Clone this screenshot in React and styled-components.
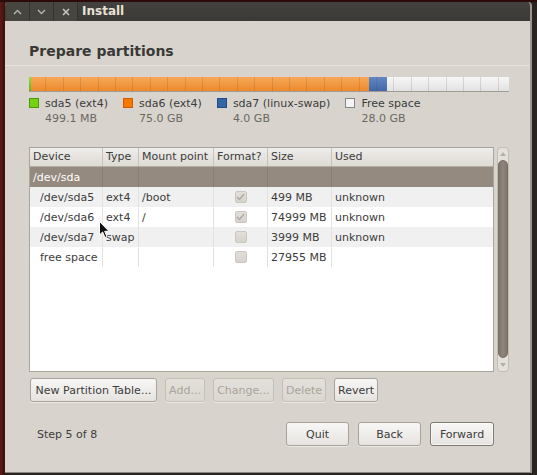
import React from "react";
import styled, { createGlobalStyle, css } from "styled-components";

const GlobalStyle = createGlobalStyle`
  html, body { margin: 0; padding: 0; }
  body {
    width: 537px;
    height: 475px;
    overflow: hidden;
    background: #2a2421;
    font-family: "DejaVu Sans", "Liberation Sans", sans-serif;
    font-size: 11px;
    color: #3c3c3c;
  }
`;

const Desktop = styled.div`
  position: relative;
  width: 537px;
  height: 475px;
  display: flex;
  align-items: flex-start;
  padding: 2px 0 0 5px;
  box-sizing: border-box;
  background: linear-gradient(to right, #5a1b16 0, #3d0f0c 5px, #2a2421 5px);
  &::before {
    content: "";
    position: absolute;
    left: 0; top: 0; right: 0; height: 2px;
    background: #2c0c0b;
  }
`;

const Window = styled.div`
  position: relative;
  width: 527px;
  height: 471px;
  background: #d8d4cd;
  border-right: 2px solid #9a958e;
  border-bottom: 1px solid #8a857e;
  border-radius: 4px 4px 0 0;
  box-sizing: border-box;
  display: flex;
  flex-direction: column;
  overflow: hidden;
`;

const TitleBar = styled.div`
  height: 19px;
  flex: 0 0 19px;
  display: flex;
  align-items: center;
  background: linear-gradient(#43423e, #3a3935);
  padding-left: 1px;
`;

const WinButton = styled.div`
  width: 24px;
  height: 19px;
  display: flex;
  align-items: center;
  justify-content: center;
  background: #46453f;
  border-right: 1px solid #34332f;
  box-sizing: border-box;
  color: #b5b2ab;
`;

const TitleText = styled.div`
  margin-left: 4px;
  font-weight: bold;
  font-size: 12px;
  color: #e6e2da;
  line-height: 19px;
`;

const Body = styled.div`
  display: flex;
  flex-direction: column;
  padding: 0 21px 0 24px;
`;

const Heading = styled.h1`
  margin: 22px 0 0;
  font-size: 14px;
  line-height: 17px;
  font-weight: bold;
  color: #3a3935;
`;

const Divider = styled.div`
  height: 1px;
  margin: 5px -21px 0 -24px;
  background: #e6e3de;
`;

const Bar = styled.div`
  position: relative;
  margin-top: 11px;
  width: 480px;
  height: 14px;
  display: flex;
  box-shadow: 0 1px 0 rgba(60, 50, 40, 0.35);
  &::after {
    content: "";
    position: absolute;
    inset: 0;
    background: repeating-linear-gradient(
      to right,
      transparent 0,
      transparent 16.4px,
      rgba(90, 60, 30, 0.16) 16.4px,
      rgba(90, 60, 30, 0.16) 17.4px
    );
  }
`;

const segColors = {
  green: ["#8ae234", "#5fb51a"],
  orange: ["#f8a858", "#ec8a2e"],
  blue: ["#6288c4", "#3f67a6"],
  free: ["#f6f6f6", "#e2e2e2"],
};

const Segment = styled.div`
  flex: 0 0 ${(p) => p.$w}px;
  background: linear-gradient(
    ${(p) => segColors[p.$kind][0]},
    ${(p) => segColors[p.$kind][1]}
  );
`;

const Legend = styled.div`
  margin-top: 5px;
  display: flex;
  gap: 15px;
`;

const LegendItem = styled.div`
  display: flex;
  align-items: flex-start;
  gap: 6px;
`;

const swatch = {
  green: ["#73d216", "#4e9a06"],
  orange: ["#f57900", "#ce5c00"],
  blue: ["#3465a4", "#204a87"],
  free: ["#f4f4f4", "#888683"],
};

const Swatch = styled.div`
  width: 10px;
  height: 10px;
  margin-top: 2px;
  box-sizing: border-box;
  background: ${(p) => swatch[p.$kind][0]};
  border: 1px solid ${(p) => swatch[p.$kind][1]};
`;

const LegendText = styled.div`
  display: flex;
  flex-direction: column;
  line-height: 15px;
`;

const LegendName = styled.span`
  color: #3c3c3c;
`;

const LegendSize = styled.span`
  color: #6b6862;
`;

const TableArea = styled.div`
  margin-top: 21px;
  display: flex;
  gap: 3px;
  height: 225px;
`;

const TableFrame = styled.div`
  width: 465px;
  height: 225px;
  box-sizing: border-box;
  border: 1px solid #a9a49c;
  background: #ffffff;
  display: flex;
  flex-direction: column;
`;

const COLS = "73px 36px 75px 54px 64px 1fr";

const HeaderRow = styled.div`
  display: grid;
  grid-template-columns: ${COLS};
  height: 19px;
  box-sizing: border-box;
  border-bottom: 1px solid #b3aea6;
  background: linear-gradient(#efedea, #dedad4);
`;

const HeaderCell = styled.div`
  padding-left: 3px;
  line-height: 18px;
  color: #3c3c3c;
  white-space: nowrap;
  overflow: hidden;
  border-right: ${(p) => (p.$last ? "none" : "1px solid #c6c1ba")};
`;

const rowBg = {
  group: "#958a80",
  odd: "#f0f0f0",
  even: "#ffffff",
};

const Row = styled.div`
  display: grid;
  grid-template-columns: ${COLS};
  height: 20px;
  background: ${(p) => rowBg[p.$variant]};
  color: ${(p) => (p.$variant === "group" ? "#ffffff" : "#3c3c3c")};
`;

const Cell = styled.div`
  display: flex;
  align-items: center;
  justify-content: ${(p) => (p.$center ? "center" : "flex-start")};
  padding-left: ${(p) => (p.$center ? 0 : p.$indent ? 10 : 3)}px;
  white-space: nowrap;
  overflow: hidden;
  border-right: ${(p) =>
    p.$last
      ? "none"
      : p.$group
      ? "1px solid #8a7f76"
      : "1px solid #e2e2e2"};
`;

const Check = styled.div`
  width: 12px;
  height: 12px;
  box-sizing: border-box;
  border: 1px solid #cbc7c0;
  border-radius: 2px;
  background: linear-gradient(#e2dfda, #d6d3cd);
  display: flex;
  align-items: center;
  justify-content: center;
`;

const Scrollbar = styled.div`
  position: relative;
  width: 12px;
  height: 225px;
  box-sizing: border-box;
  border: 1px solid #c2bdb5;
  border-radius: 4px;
  background: #e4e1dc;
  display: flex;
  flex-direction: column;
  align-items: center;
`;

const ScrollArrow = styled.div`
  height: 12px;
  display: flex;
  align-items: center;
  justify-content: center;
`;

const Thumb = styled.div`
  width: 10px;
  flex: 1;
  margin: 0 0 1px;
  border-radius: 5px;
  background: linear-gradient(to right, #7f766d, #8e857c 50%, #7f766d);
  border: 1px solid #756c63;
  box-sizing: border-box;
`;

const ButtonRow = styled.div`
  margin-top: 6px;
  display: flex;
  gap: 8px;
  padding-left: 1px;
`;

const Button = styled.button`
  height: 24px;
  width: ${(p) => p.$w}px;
  padding: 0;
  box-sizing: border-box;
  font-family: "DejaVu Sans", "Liberation Sans", sans-serif;
  font-size: 11px;
  border-radius: 3px;
  border: 1px solid #a7a29a;
  color: #3c3c3c;
  background: linear-gradient(#f8f7f5, #e6e3df);
  box-shadow: 0 1px 0 rgba(255, 255, 255, 0.5);
  ${(p) =>
    p.disabled &&
    css`
      color: #a9a49c;
      border-color: #c4bfb7;
      background: linear-gradient(#e3e0db, #dbd7d1);
    `}
  ${(p) =>
    p.$default &&
    css`
      border-color: #7e7971;
      box-shadow: inset 0 0 0 1px rgba(255, 255, 255, 0.6);
    `}
`;

const Footer = styled.div`
  margin-top: 20px;
  display: flex;
  align-items: center;
  width: 465px;
`;

const StepLabel = styled.div`
  margin-left: 8px;
  flex: 1;
  color: #3c3c3c;
`;

const FooterButtons = styled.div`
  display: flex;
  gap: 9px;
`;

const Cursor = styled.svg`
  position: absolute;
  left: 99px;
  top: 221px;
`;

const rows = [
  { dev: "/dev/sda5", type: "ext4", mount: "/boot", fmt: true, size: "499 MB", used: "unknown" },
  { dev: "/dev/sda6", type: "ext4", mount: "/", fmt: true, size: "74999 MB", used: "unknown" },
  { dev: "/dev/sda7", type: "swap", mount: "", fmt: false, size: "3999 MB", used: "unknown" },
  { dev: "free space", type: "", mount: "", fmt: false, size: "27955 MB", used: "" },
];

const legend = [
  { kind: "green", name: "sda5 (ext4)", size: "499.1 MB" },
  { kind: "orange", name: "sda6 (ext4)", size: "75.0 GB" },
  { kind: "blue", name: "sda7 (linux-swap)", size: "4.0 GB" },
  { kind: "free", name: "Free space", size: "28.0 GB" },
];

const Chevron = ({ up }) => (
  <svg width="9" height="6" viewBox="0 0 9 6">
    <path
      d={up ? "M1 5 L4.5 1.5 L8 5" : "M1 1 L4.5 4.5 L8 1"}
      fill="none"
      stroke="#b8b5ae"
      strokeWidth="1.4"
    />
  </svg>
);

export default function App() {
  return (
    <>
      <GlobalStyle />
      <Desktop>
        <Window>
          <TitleBar>
            <WinButton>
              <Chevron up />
            </WinButton>
            <WinButton>
              <Chevron />
            </WinButton>
            <WinButton>
              <svg width="8" height="8" viewBox="0 0 8 8">
                <path d="M1 1 L7 7 M7 1 L1 7" stroke="#c8c5be" strokeWidth="1.6" />
              </svg>
            </WinButton>
            <TitleText>Install</TitleText>
          </TitleBar>
          <Body>
            <Heading>Prepare partitions</Heading>
            <Divider />
            <Bar>
              <Segment $kind="green" $w={2} />
              <Segment $kind="orange" $w={338} />
              <Segment $kind="blue" $w={18} />
              <Segment $kind="free" $w={122} />
            </Bar>
            <Legend>
              {legend.map((l) => (
                <LegendItem key={l.name}>
                  <Swatch $kind={l.kind} />
                  <LegendText>
                    <LegendName>{l.name}</LegendName>
                    <LegendSize>{l.size}</LegendSize>
                  </LegendText>
                </LegendItem>
              ))}
            </Legend>
            <TableArea>
              <TableFrame>
                <HeaderRow>
                  <HeaderCell>Device</HeaderCell>
                  <HeaderCell>Type</HeaderCell>
                  <HeaderCell>Mount point</HeaderCell>
                  <HeaderCell>Format?</HeaderCell>
                  <HeaderCell>Size</HeaderCell>
                  <HeaderCell $last>Used</HeaderCell>
                </HeaderRow>
                <Row $variant="group">
                  <Cell $group>/dev/sda</Cell>
                  <Cell $group />
                  <Cell $group />
                  <Cell $group />
                  <Cell $group />
                  <Cell $group $last />
                </Row>
                {rows.map((r, i) => (
                  <Row key={r.dev} $variant={i % 2 === 0 ? "odd" : "even"}>
                    <Cell $indent>{r.dev}</Cell>
                    <Cell>{r.type}</Cell>
                    <Cell>{r.mount}</Cell>
                    <Cell $center>
                      <Check>
                        {r.fmt && (
                          <svg width="9" height="8" viewBox="0 0 9 8">
                            <path
                              d="M1 4 L3.5 6.5 L8 1"
                              fill="none"
                              stroke="#aeaaa3"
                              strokeWidth="1.5"
                            />
                          </svg>
                        )}
                      </Check>
                    </Cell>
                    <Cell>{r.size}</Cell>
                    <Cell $last>{r.used}</Cell>
                  </Row>
                ))}
              </TableFrame>
              <Scrollbar>
                <ScrollArrow>
                  <svg width="6" height="4" viewBox="0 0 6 4">
                    <path d="M0 4 L3 0 L6 4 Z" fill="#b4afa8" />
                  </svg>
                </ScrollArrow>
                <Thumb />
                <ScrollArrow>
                  <svg width="6" height="4" viewBox="0 0 6 4">
                    <path d="M0 0 L3 4 L6 0 Z" fill="#b4afa8" />
                  </svg>
                </ScrollArrow>
              </Scrollbar>
            </TableArea>
            <ButtonRow>
              <Button $w={127}>New Partition Table...</Button>
              <Button $w={40} disabled>Add...</Button>
              <Button $w={61} disabled>Change...</Button>
              <Button $w={44} disabled>Delete</Button>
              <Button $w={44}>Revert</Button>
            </ButtonRow>
            <Footer>
              <StepLabel>Step 5 of 8</StepLabel>
              <FooterButtons>
                <Button $w={63}>Quit</Button>
                <Button $w={63}>Back</Button>
                <Button $w={64} $default>Forward</Button>
              </FooterButtons>
            </Footer>
          </Body>
        </Window>
        <Cursor width="12" height="18" viewBox="0 0 12 18">
          <path
            d="M0.5 0.5 L0.5 14 L3.6 11 L6 16.5 L8 15.6 L5.7 10.3 L10 10.3 Z"
            fill="#111"
            stroke="#fff"
            strokeWidth="1"
          />
        </Cursor>
      </Desktop>
    </>
  );
}
